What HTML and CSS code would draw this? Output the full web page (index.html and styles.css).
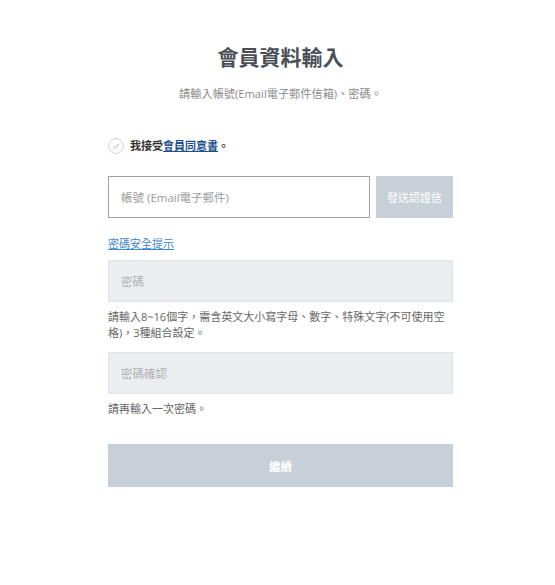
FILE: index.html
```html
<!DOCTYPE html>
<html lang="zh-Hant">
<head>
<meta charset="utf-8">
<title>會員資料輸入</title>
<link rel="stylesheet" href="styles.css">
</head>
<body>
<main class="page">
  <h1 class="title">會員資料輸入</h1>
  <p class="subtitle">請輸入帳號(Email電子郵件信箱)、密碼。</p>

  <label class="agree">
    <span class="check">
      <svg width="16" height="16" viewBox="0 0 16 16"><circle cx="8" cy="8" r="7.5" fill="none" stroke="#cfd3d8"/><path d="M4.8 8.3 L7 10.4 L11.3 5.6" fill="none" stroke="#b5bac0" stroke-width="1"/></svg>
    </span>
    <span class="agree-text">我接受<a class="agree-link" href="#">會員同意書</a>。</span>
  </label>

  <div class="email-row">
    <div class="field field-white">帳號 (Email電子郵件)</div>
    <button class="send-btn">發送認證信</button>
  </div>

  <a class="hint-link" href="#">密碼安全提示</a>

  <div class="field field-gray">密碼</div>
  <p class="help">請輸入8~16個字，需含英文大小寫字母、數字、特殊文字(不可使用空格)，3種組合設定。</p>

  <div class="field field-gray confirm">密碼確認</div>
  <p class="help">請再輸入一次密碼。</p>

  <button class="continue-btn">繼續</button>
</main>
</body>
</html>
```

FILE: styles.css
```css
* { box-sizing: border-box; }
html, body { margin: 0; padding: 0; background: #fff; }
body {
  font-family: "Open Sans", "Noto Sans CJK TC", sans-serif;
  color: #555;
}
.page {
  width: 345px;
  margin-left: 108px;
  padding-top: 42px;
  display: flex;
  flex-direction: column;
}
.title {
  margin: 0;
  text-align: center;
  font-size: 21px;
  line-height: 30px;
  font-weight: 700;
  color: #4a4f57;
}
.subtitle {
  margin: 14px 0 0;
  text-align: center;
  font-size: 11.2px;
  line-height: 16px;
  color: #8a8a8a;
}
.agree {
  margin-top: 36px;
  display: flex;
  align-items: center;
  gap: 6px;
  height: 16px;
}
.check { display: flex; width: 16px; height: 16px; }
.agree-text {
  font-size: 11px;
  font-weight: 700;
  color: #333;
  line-height: 16px;
}
.agree-link { color: #1d4f8f; text-decoration: underline; }
.email-row {
  margin-top: 22px;
  display: flex;
  gap: 6px;
  height: 42px;
}
.field {
  height: 42px;
  display: flex;
  align-items: center;
  padding-left: 12px;
  font-size: 11.5px;
  color: #a6a6a6;
}
.field-white {
  flex: 1;
  border: 1px solid #9da2a8;
  background: #fff;
  color: #9a9a9a;
}
.send-btn {
  width: 77px;
  height: 42px;
  border: 0;
  background: #c7cfd8;
  color: #fff;
  font-family: inherit;
  font-size: 11px;
  padding: 0;
}
.hint-link {
  margin-top: 18px;
  font-size: 11px;
  line-height: 16px;
  color: #3f86d4;
  text-decoration: underline;
  align-self: flex-start;
}
.field-gray {
  margin-top: 8px;
  background: #ebeef1;
  border: 1px solid #dfe3e7;
  color: #b0b0b0;
}
.confirm { margin-top: 11px; }
.help {
  margin: 7px 0 0;
  font-size: 11px;
  line-height: 16px;
  color: #666;
}
.continue-btn {
  margin-top: 27px;
  height: 43px;
  border: 0;
  background: #c7cfd8;
  color: #fff;
  font-family: inherit;
  font-size: 11.5px;
  font-weight: 700;
}
```
